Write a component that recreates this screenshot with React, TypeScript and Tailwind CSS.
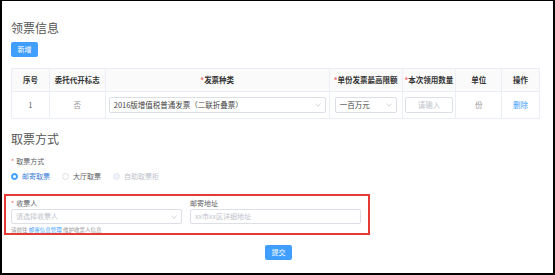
import React from 'react';

const cols = [
  { label: '序号', w: 'w-[38px]' },
  { label: '委托代开标志', w: 'w-[56px]' },
  { label: '发票种类', w: 'w-[225px]', req: true },
  { label: '单份发票最高限额', w: 'w-[73px]', req: true },
  { label: '本次领用数量', w: 'w-[54px]', req: true },
  { label: '单位', w: 'w-[46px]' },
  { label: '操作', w: 'w-[37px]' },
];

function Chevron() {
  return (
    <svg width="6" height="4" viewBox="0 0 6 4" className="shrink-0">
      <path d="M0.5 0.8 L3 3.2 L5.5 0.8" fill="none" stroke="#c0c4cc" strokeWidth="0.7" />
    </svg>
  );
}

function Radio({ label, checked, disabled }: { label: string; checked?: boolean; disabled?: boolean }) {
  return (
    <div className="flex items-center gap-[4px]">
      {checked ? (
        <span className="w-[7px] h-[7px] rounded-full border border-[#409eff] bg-[#409eff] flex items-center justify-center">
          <span className="w-[3px] h-[3px] rounded-full bg-white" />
        </span>
      ) : (
        <span className={`w-[7px] h-[7px] rounded-full border ${disabled ? 'border-[#e4e7ed] bg-[#edf2fc]' : 'border-[#dcdfe6] bg-white'}`} />
      )}
      <span className={`text-[7px] leading-[10px] ${checked ? 'text-[#3d7fd9]' : disabled ? 'text-[#c0c4cc]' : 'text-[#606266]'}`}>{label}</span>
    </div>
  );
}

export default function App() {
  return (
    <div
      className="w-[555px] h-[275px] bg-white border-t border-r-2 border-b-2 border-l-2 border-black pl-[9px] pt-[20px] overflow-hidden"
      style={{ fontFamily: '"Noto Sans CJK SC", "Noto Sans", sans-serif' }}
    >
      {/* 领票信息 */}
      <div className="text-[12px] leading-[14px] text-[#555]">领票信息</div>
      <button className="mt-[7px] h-[15px] w-[27px] bg-[#409eff] text-white text-[7px] rounded-[2px] flex items-center justify-center">
        新增
      </button>

      <div className="mt-[11px] w-[529px] border border-[#ebeef5] text-[7.5px]">
        <div className="flex h-[23px] bg-[#fafafa] border-b border-[#ebeef5]">
          {cols.map((c, i) => (
            <div
              key={c.label}
              className={`${c.w} flex items-center justify-center font-semibold text-[#333] ${i < cols.length - 1 ? 'border-r border-[#ebeef5]' : ''}`}
            >
              {c.req && <span className="text-[#f56c6c]">*</span>}
              {c.label}
            </div>
          ))}
        </div>
        <div className="flex h-[26px] text-[#606266]">
          <div className="w-[38px] flex items-center justify-center border-r border-[#ebeef5]">1</div>
          <div className="w-[56px] flex items-center justify-center border-r border-[#ebeef5] text-[#999]">否</div>
          <div className="w-[225px] flex items-center justify-center border-r border-[#ebeef5]">
            <div className="w-[217px] h-[16px] border border-[#dcdfe6] rounded-[2px] flex items-center justify-between px-[4px]">
              <span className="text-[#444]">2016版增值税普通发票（二联折叠票）</span>
              <Chevron />
            </div>
          </div>
          <div className="w-[73px] flex items-center justify-center border-r border-[#ebeef5]">
            <div className="w-[62px] h-[16px] border border-[#dcdfe6] rounded-[2px] flex items-center justify-between px-[4px]">
              <span className="text-[#444]">一百万元</span>
              <Chevron />
            </div>
          </div>
          <div className="w-[54px] flex items-center justify-center border-r border-[#ebeef5]">
            <div className="w-[48px] h-[16px] border border-[#dcdfe6] rounded-[2px] flex items-center justify-center text-[#c0c4cc]">
              请输入
            </div>
          </div>
          <div className="w-[46px] flex items-center justify-center border-r border-[#ebeef5] text-[#999]">份</div>
          <div className="w-[37px] flex items-center justify-center text-[#409eff]">删除</div>
        </div>
      </div>

      {/* 取票方式 */}
      <div className="mt-[13px] text-[12px] leading-[14px] text-[#555]">取票方式</div>
      <div className="mt-[10px] text-[7px] leading-[10px] text-[#606266]">
        <span className="text-[#f56c6c] mr-[2px]">*</span>取票方式
      </div>
      <div className="mt-[5px] flex items-center gap-[12px]">
        <Radio label="邮寄取票" checked />
        <Radio label="大厅取票" />
        <Radio label="自助取票柜" disabled />
      </div>

      <div className="mt-[13px] ml-[-7px] w-[366px] h-[41px] border-2 border-[#e53935] pl-[5px] pt-[2px] flex gap-[8px]">
        <div className="w-[171px]">
          <div className="text-[7px] leading-[10px] text-[#606266]">
            <span className="text-[#f56c6c] mr-[2px]">*</span>收票人
          </div>
          <div className="mt-[1px] h-[15px] border border-[#dcdfe6] rounded-[2px] flex items-center justify-between px-[4px] text-[7px] text-[#c0c4cc]">
            <span>请选择收票人</span>
            <Chevron />
          </div>
          <div className="mt-[3px] text-[5.5px] leading-[6px] text-[#999]">
            请前往 <span className="text-[#409eff]">邮寄信息管理</span> 维护收票人信息
          </div>
        </div>
        <div className="w-[171px]">
          <div className="text-[7px] leading-[10px] text-[#606266]">邮寄地址</div>
          <div className="mt-[1px] h-[15px] border border-[#dcdfe6] rounded-[2px] flex items-center px-[4px] text-[7px] text-[#c0c4cc]">
            xx市xx区详细地址
          </div>
        </div>
      </div>

      <button className="mt-[10px] ml-[254px] h-[15px] w-[27px] bg-[#409eff] text-white text-[7px] rounded-[2px] flex items-center justify-center">
        提交
      </button>
    </div>
  );
}
